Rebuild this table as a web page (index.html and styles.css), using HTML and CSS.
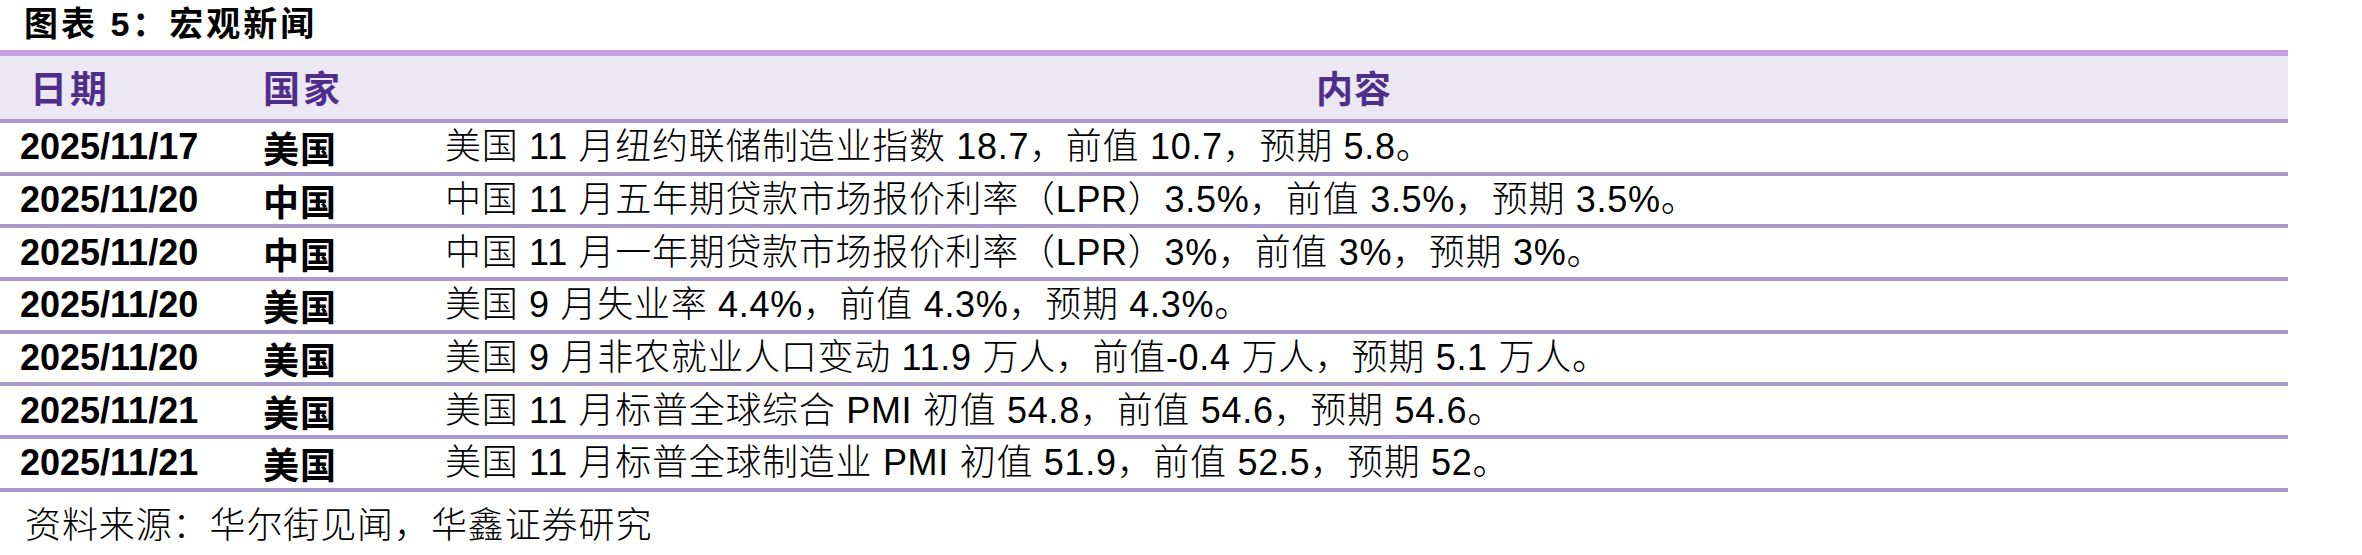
FILE: index.html
```html
<!DOCTYPE html>
<html lang="zh-CN">
<head>
<meta charset="utf-8">
<title>图表 5：宏观新闻</title>
<link rel="stylesheet" href="styles.css">
</head>
<body>
<h1 class="title">图表 5：宏观新闻</h1>
<table class="news">
  <colgroup>
    <col class="col-date">
    <col class="col-country">
    <col class="col-content">
  </colgroup>
  <thead>
    <tr>
      <th class="h-date">日期</th>
      <th class="h-country">国家</th>
      <th class="h-content">内容</th>
    </tr>
  </thead>
  <tbody>
    <tr><td class="date">2025/11/17</td><td class="country">美国</td><td class="content">美国 11 月纽约联储制造业指数 18.7，前值 10.7，预期 5.8。</td></tr>
    <tr><td class="date">2025/11/20</td><td class="country">中国</td><td class="content">中国 11 月五年期贷款市场报价利率（LPR）3.5%，前值 3.5%，预期 3.5%。</td></tr>
    <tr><td class="date">2025/11/20</td><td class="country">中国</td><td class="content">中国 11 月一年期贷款市场报价利率（LPR）3%，前值 3%，预期 3%。</td></tr>
    <tr><td class="date">2025/11/20</td><td class="country">美国</td><td class="content">美国 9 月失业率 4.4%，前值 4.3%，预期 4.3%。</td></tr>
    <tr><td class="date">2025/11/20</td><td class="country">美国</td><td class="content">美国 9 月非农就业人口变动 11.9 万人，前值-0.4 万人，预期 5.1 万人。</td></tr>
    <tr><td class="date">2025/11/21</td><td class="country">美国</td><td class="content">美国 11 月标普全球综合 PMI 初值 54.8，前值 54.6，预期 54.6。</td></tr>
    <tr><td class="date">2025/11/21</td><td class="country">美国</td><td class="content">美国 11 月标普全球制造业 PMI 初值 51.9，前值 52.5，预期 52。</td></tr>
  </tbody>
</table>
<p class="source">资料来源：华尔街见闻，华鑫证券研究</p>
</body>
</html>
```
FILE: styles.css
```css
html, body {
  margin: 0;
  padding: 0;
  background: #ffffff;
}

body {
  font-family: "Liberation Sans", "Noto Sans CJK SC", sans-serif;
  color: #000000;
}

.title {
  margin: 0;
  height: 50px;
  padding-left: 24px;
  font-size: 34px;
  line-height: 48px;
  font-weight: 700;
  letter-spacing: 3px;
  color: #000000;
}

.news {
  width: 2288px;
  border-collapse: collapse;
  table-layout: fixed;
}

.col-date { width: 238px; }
.col-country { width: 182px; }

.news thead tr {
  background: #ebe7f3;
  border-top: 6px solid #c49fe1;
  border-bottom: 4px solid #a99acd;
}

.news th {
  height: 63px;
  padding: 0;
  font-family: "Noto Sans CJK SC", sans-serif;
  font-size: 37px;
  font-weight: 700;
  color: #4f2e8b;
  text-align: left;
  vertical-align: middle;
  line-height: 1;
}

.news th.h-date { padding-left: 30px; letter-spacing: 3px; }
.news th.h-country { padding-left: 25px; letter-spacing: 3px; }
.news th.h-content { text-align: center; letter-spacing: 1px; }

.news tbody tr {
  border-bottom: 4px solid #a99acd;
}

.news td {
  height: 48.7px;
  padding: 0;
  vertical-align: middle;
  line-height: 1;
  white-space: nowrap;
}

.news td.date {
  padding-left: 20px;
  font-family: "Liberation Sans", sans-serif;
  font-size: 36px;
  font-weight: 700;
}

.news td.country {
  padding-left: 25px;
  font-family: "Noto Sans CJK SC", sans-serif;
  font-size: 36px;
  font-weight: 700;
  letter-spacing: 1px;
}

.news td.content {
  padding-left: 25px;
  font-family: "Liberation Sans", "Noto Sans CJK SC", sans-serif;
  font-size: 36px;
  font-weight: 300;
  letter-spacing: 0.7px;
}

.source {
  margin: 0;
  padding: 8px 0 0 25px;
  font-family: "Noto Sans CJK SC", sans-serif;
  font-size: 36px;
  font-weight: 300;
  line-height: 44px;
  letter-spacing: 0.9px;
}
```
